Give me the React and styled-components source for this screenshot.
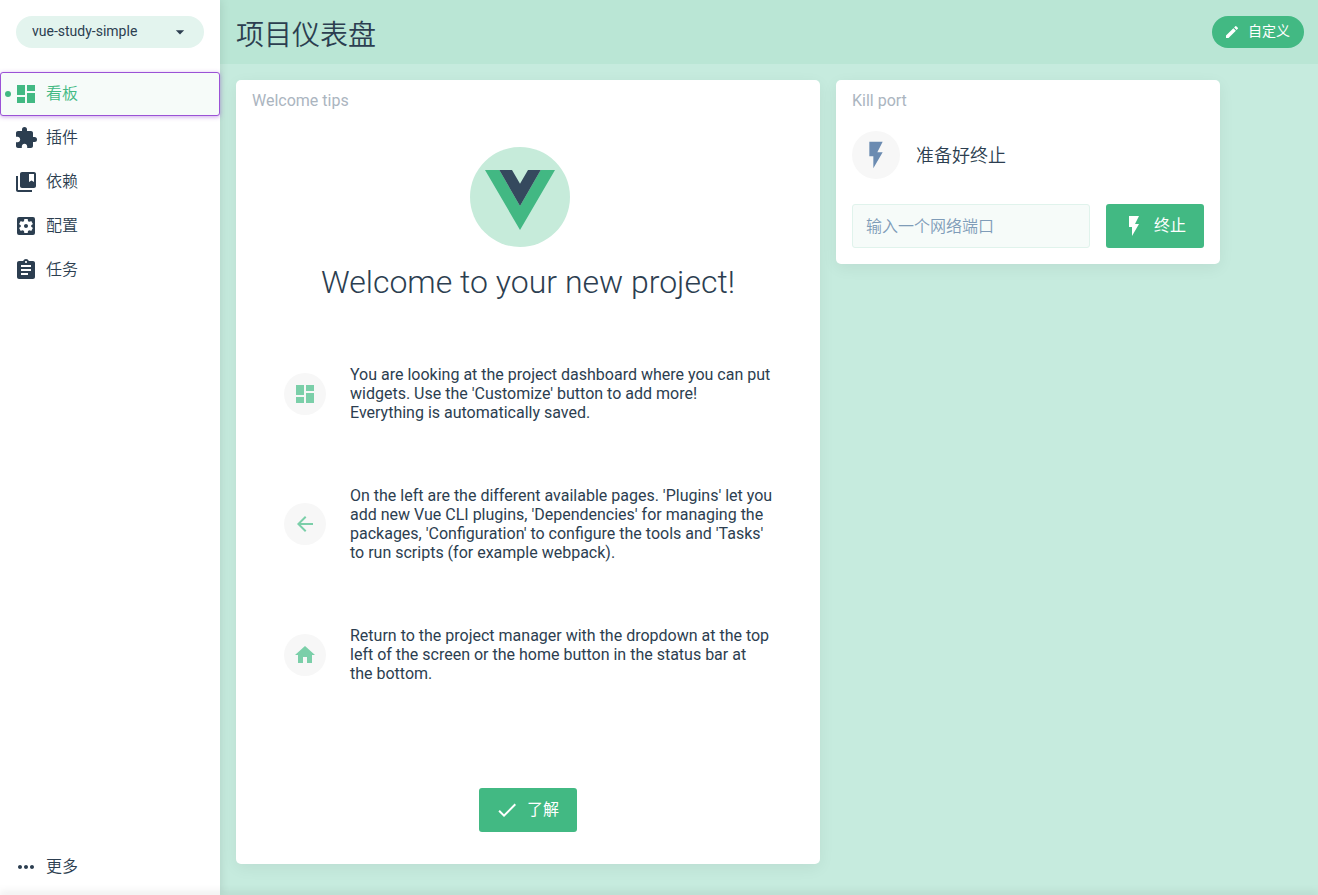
import React from "react";
import styled, { createGlobalStyle } from "styled-components";
import {
  MdDashboard,
  MdExtension,
  MdCollectionsBookmark,
  MdSettingsApplications,
  MdAssignment,
  MdMoreHoriz,
  MdArrowDropDown,
  MdEdit,
  MdFlashOn,
  MdDone,
  MdArrowBack,
  MdHome,
} from "react-icons/md";

const color = {
  green: "#42b983",
  dark: "#2c3e50",
  page: "#c6ebde",
  header: "#bae6d5",
  soft: "#e3f4ee",
  faint: "#f6fbf9",
  disc: "#f7f7f7",
  muted: "#abb5bf",
  blue: "#6b8bb1",
  purple: "#9b52d6",
};

const GlobalStyle = createGlobalStyle`
  *, *::before, *::after { box-sizing: border-box; }
  body { margin: 0; }
  body, button, input, select {
    font-family: Roboto, "Noto Sans CJK SC", sans-serif;
    font-size: 16px;
    color: ${color.dark};
  }
  h1, h2, h3, p, ul { margin: 0; padding: 0; }
`;

const Shell = styled.div`
  display: flex;
  flex-direction: column;
  min-height: 100vh;
  overflow: hidden;
`;

const Columns = styled.div`
  flex: 1;
  display: flex;
`;

const Sidebar = styled.aside`
  flex: none;
  width: 220px;
  display: flex;
  flex-direction: column;
  background: #fff;
  box-shadow: 0 0 10px rgba(0, 0, 0, 0.12);
  z-index: 1;
`;

const ProjectPicker = styled.label`
  display: grid;
  align-items: center;
  margin: 16px 16px 24px;
  > * { grid-area: 1 / 1; }
  svg {
    justify-self: end;
    margin-right: 14px;
    pointer-events: none;
  }
`;

const ProjectSelect = styled.select`
  appearance: none;
  width: 100%;
  height: 32px;
  padding: 0 40px 2px 16px;
  border: 0;
  border-radius: 16px;
  background: ${color.soft};
  font-size: 14px;
`;

const NavList = styled.ul`
  list-style: none;
`;

const Label = styled.span`
  padding-bottom: 4px;
`;

const NavLink = styled.a`
  display: flex;
  align-items: center;
  gap: 8px;
  height: 44px;
  padding: 0 13px;
  border: 1px solid ${(p) => (p.$active ? color.purple : "transparent")};
  border-radius: 3px;
  background: ${(p) => (p.$active ? color.faint : "transparent")};
  box-shadow: ${(p) => (p.$active ? "0 1px 4px rgba(155, 82, 214, 0.5)" : "none")};
  color: ${(p) => (p.$active ? color.green : color.dark)};
  font-weight: 350;
  text-decoration: none;
  position: relative;
  &::before {
    content: "";
    display: ${(p) => (p.$active ? "block" : "none")};
    position: absolute;
    left: 4px;
    width: 6px;
    height: 6px;
    border-radius: 50%;
    background: ${color.green};
  }
`;

const SidebarFoot = styled.div`
  margin-top: auto;
  padding-bottom: 6px;
`;

const Main = styled.main`
  flex: 1;
  min-width: 0;
  background: ${color.page};
`;

const Header = styled.header`
  display: flex;
  align-items: center;
  justify-content: space-between;
  height: 64px;
  padding: 0 14px 0 16px;
  background: ${color.header};
`;

const PageTitle = styled.h1`
  padding-top: 8px;
  font-size: 28px;
  font-weight: 350;
  line-height: 40px;
`;

const Button = styled.button`
  display: inline-flex;
  align-items: center;
  justify-content: center;
  gap: 8px;
  height: ${(p) => (p.$round ? 32 : 44)}px;
  padding: ${(p) => (p.$round ? "0 14px 0 12px" : "0 18px 0 16px")};
  border: 0;
  border-radius: ${(p) => (p.$round ? 16 : 3)}px;
  background: ${color.green};
  color: #fff;
  font-size: ${(p) => (p.$round ? 14 : 16)}px;
  white-space: nowrap;
`;

const Widgets = styled.div`
  display: grid;
  grid-template-columns: minmax(0, 584px) minmax(0, 384px);
  align-items: start;
  gap: 16px;
  padding: 16px 16px 31px;
`;

const Card = styled.section`
  padding: 0 16px ${(p) => (p.$roomy ? 32 : 16)}px;
  border-radius: 5px;
  background: #fff;
  box-shadow: 0 4px 16px rgba(0, 0, 0, 0.06);
`;

const CardTitle = styled.h2`
  padding: 10px 0 9px;
  line-height: 22px;
  font-size: 16px;
  font-weight: 400;
  color: ${color.muted};
`;

const Welcome = styled.div`
  display: flex;
  flex-direction: column;
  align-items: center;
  padding: 26px 31px 0;
`;

const Logo = styled.svg`
  width: 100px;
  height: 100px;
  margin-right: 16px;
`;

const WelcomeTitle = styled.h3`
  margin: 16px 0 64px;
  line-height: 38px;
  font-size: 32px;
  font-weight: 300;
  white-space: nowrap;
`;

const TipList = styled.ul`
  display: grid;
  gap: 64px;
  margin-bottom: 105px;
  padding-left: 1px;
  list-style: none;
`;

const Tip = styled.li`
  display: flex;
  align-items: center;
  gap: 24px;
  line-height: 19px;
`;

const Disc = styled.span`
  flex: none;
  display: grid;
  place-items: center;
  width: ${(p) => p.$size}px;
  height: ${(p) => p.$size}px;
  border-radius: 50%;
  background: ${color.disc};
  color: ${(p) => p.$tint};
`;

const Status = styled.div`
  display: flex;
  align-items: center;
  gap: 16px;
  margin: 10px 0 25px;
  font-size: 18px;
  font-weight: 350;
`;

const StatusText = styled.p`
  padding-bottom: 2px;
`;

const PortForm = styled.form`
  display: grid;
  grid-template-columns: minmax(0, 1fr) auto;
  gap: 16px;
`;

const PortInput = styled.input`
  width: 100%;
  height: 44px;
  padding: 0 13px;
  border: 1px solid #e0f3ec;
  border-radius: 3px;
  background: ${color.faint};
  font-weight: 350;
  &::placeholder {
    color: #7f9cb8;
    opacity: 1;
  }
`;

const StatusBar = styled.footer`
  position: relative;
  z-index: 2;
  box-shadow: 0 0 8px 1px rgba(0, 0, 0, 0.25);
`;

const pages = [
  { label: "看板", Icon: MdDashboard, active: true },
  { label: "插件", Icon: MdExtension },
  { label: "依赖", Icon: MdCollectionsBookmark },
  { label: "配置", Icon: MdSettingsApplications },
  { label: "任务", Icon: MdAssignment },
];

const tips = [
  {
    Icon: MdDashboard,
    text: "You are looking at the project dashboard where you can put widgets. Use the 'Customize' button to add more! Everything is automatically saved.",
  },
  {
    Icon: MdArrowBack,
    text: "On the left are the different available pages. 'Plugins' let you add new Vue CLI plugins, 'Dependencies' for managing the packages, 'Configuration' to configure the tools and 'Tasks' to run scripts (for example webpack).",
  },
  {
    Icon: MdHome,
    text: "Return to the project manager with the dropdown at the top left of the screen or the home button in the status bar at the\u00a0bottom.",
  },
];

export default function App() {
  return (
    <Shell>
      <GlobalStyle />
      <Columns>
        <Sidebar>
          <ProjectPicker>
            <ProjectSelect aria-label="Project" defaultValue="vue-study-simple">
              <option>vue-study-simple</option>
            </ProjectSelect>
            <MdArrowDropDown size={20} />
          </ProjectPicker>
          <nav>
            <NavList>
              {pages.map(({ label, Icon, active }) => (
                <li key={label}>
                  <NavLink href="#" $active={active}>
                    <Icon size={24} />
                    <Label>{label}</Label>
                  </NavLink>
                </li>
              ))}
            </NavList>
          </nav>
          <SidebarFoot>
            <NavLink href="#">
              <MdMoreHoriz size={24} />
              <Label>更多</Label>
            </NavLink>
          </SidebarFoot>
        </Sidebar>
        <Main>
          <Header>
            <PageTitle>项目仪表盘</PageTitle>
            <Button type="button" $round>
              <MdEdit size={16} />
              <Label>自定义</Label>
            </Button>
          </Header>
          <Widgets>
            <Card $roomy>
              <CardTitle>Welcome tips</CardTitle>
              <Welcome>
                <Logo viewBox="0 0 100 100" aria-hidden="true">
                  <circle cx="50" cy="50" r="50" fill="#c6ebda" />
                  <path d="M15 23H29.3L50 59 70.7 23H85L50 83Z" fill="#42b883" />
                  <path d="M29.3 23H42L50 36.7 58 23H70.7L50 59Z" fill="#35495e" />
                </Logo>
                <WelcomeTitle>Welcome to your new project!</WelcomeTitle>
                <TipList>
                  {tips.map(({ Icon, text }) => (
                    <Tip key={text}>
                      <Disc $size={42} $tint="#7bcfa9">
                        <Icon size={24} />
                      </Disc>
                      <p>{text}</p>
                    </Tip>
                  ))}
                </TipList>
                <Button type="button">
                  <MdDone size={24} />
                  <Label>了解</Label>
                </Button>
              </Welcome>
            </Card>
            <Card>
              <CardTitle>Kill port</CardTitle>
              <Status>
                <Disc $size={48} $tint={color.blue}>
                  <MdFlashOn size={32} />
                </Disc>
                <StatusText>准备好终止</StatusText>
              </Status>
              <PortForm onSubmit={(e) => e.preventDefault()}>
                <PortInput type="text" aria-label="输入一个网络端口" placeholder="输入一个网络端口" />
                <Button type="submit">
                  <MdFlashOn size={24} />
                  <Label>终止</Label>
                </Button>
              </PortForm>
            </Card>
          </Widgets>
        </Main>
      </Columns>
      <StatusBar />
    </Shell>
  );
}
